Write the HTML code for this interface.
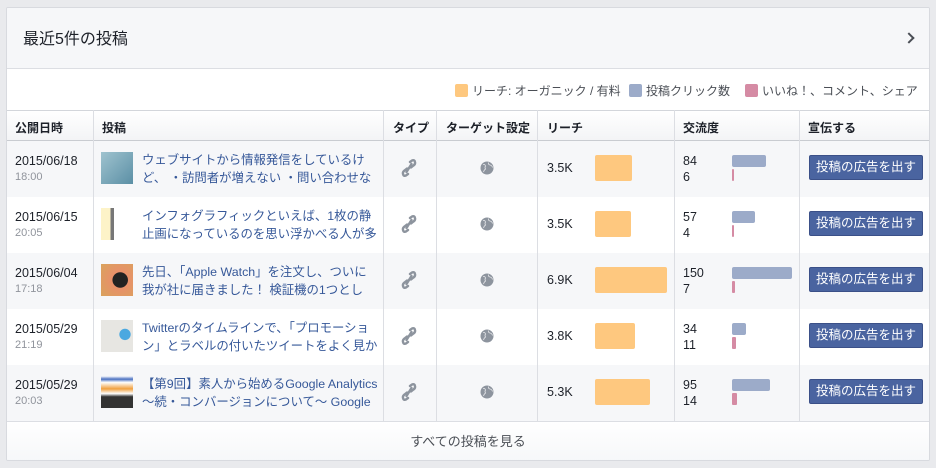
<!DOCTYPE html>
<html><head><meta charset="utf-8"><style>
*{margin:0;padding:0;box-sizing:border-box}
body{width:936px;height:468px;background:#e9eaed;font-family:"Liberation Sans","Noto Sans CJK JP",sans-serif;position:relative;overflow:hidden;color:#1d2129}
.panel{position:absolute;left:6px;top:7px;width:924px;height:454px;background:#fff;border:1px solid #d8dadf;border-radius:2px;overflow:hidden}
.hdr{position:absolute;left:0;top:0;width:100%;height:61px;background:#f6f7f9;border-bottom:1px solid #dcdee3}
.hdr .t{position:absolute;left:16px;top:17px;font-size:16px;color:#1d2129}
.hdr .ch{position:absolute;right:16px;top:26px;width:8px;height:8px;border-right:2px solid #4b4f56;border-top:2px solid #4b4f56;transform:rotate(45deg)}
.leg{position:absolute;top:74px;font-size:12px;color:#4b4f56;white-space:nowrap}
.sw{display:inline-block;width:13px;height:13px;border-radius:2px;vertical-align:-2px;margin-right:4px}
.th{position:absolute;left:0;top:102px;width:100%;height:31px;background:linear-gradient(#fff,#f3f4f6);border-top:1px solid #d3d6db;border-bottom:1px solid #c9ccd1;font-size:12px;font-weight:bold}
.th div{position:absolute;top:8px}
.vl{position:absolute;top:102px;width:1px;height:311px;background:#dcdee3}
.row{position:absolute;left:0;width:100%;height:56px;font-size:12px}
.row.g{background:#f6f7f9}
.d{position:absolute;left:8px;top:12px;font-size:12.5px;line-height:16px}
.d span{color:#90949c;font-size:11px;display:block}
.th2{position:absolute;left:94px;top:11px;width:32px;height:32px}
.p{position:absolute;left:135px;top:10px;width:236px;color:#365899;font-size:12.4px;line-height:18px}
.p div{white-space:nowrap;overflow:hidden}
.lk{position:absolute;left:394px;top:18px}
.gl{position:absolute;left:473px;top:20px}
.rn{position:absolute;left:540px;top:20px;font-size:12.5px}
.rb{position:absolute;left:588px;top:14px;height:26px;background:#fec87f;border-radius:2px}
.en{position:absolute;left:676px;top:12px;font-size:12.5px;line-height:16px}
.eb{position:absolute;left:725px;top:14px;height:12px;background:#9cabc9;border-radius:2px}
.ep{position:absolute;left:725px;top:28px;height:12px;background:#d58ba4;border-radius:1px}
.btn{position:absolute;left:802px;top:14px;width:114px;height:25px;background:#4a64a0;border:1px solid #3b5088;border-radius:2px;color:#fff;font-size:12.5px;text-align:center;line-height:23px}
.ft{position:absolute;left:0;top:413px;width:100%;height:41px;background:linear-gradient(#fff,#f6f7f9);border-top:1px solid #dcdee3;text-align:center;font-size:13px;line-height:40px;color:#4b4f56}
</style></head><body>
<svg width="0" height="0" style="position:absolute"><defs>
<symbol id="lk" viewBox="0 0 16 18"><g fill="none" stroke="#8d949e" stroke-width="2.4" stroke-linecap="round"><path d="M9 3 L11 1.5 Q13.5 0.5 14 3 Q14.5 5 12.5 6.5 L10 8.5"/><path d="M7 15 L5 16.5 Q2.5 17.5 2 15 Q1.5 13 3.5 11.5 L6 9.5"/><path d="M10.5 5 L5.5 13"/></g></symbol>
<symbol id="gl" viewBox="0 0 14 14"><circle cx="7" cy="7" r="6.5" fill="#8d949e"/><path d="M3 3.5 Q5 3 5.5 5 Q4.5 6.5 5.5 8 Q4 9 3.5 11 M8.5 1.5 Q8 3.5 10 4 Q12 4.5 12.5 6.5" fill="none" stroke="#e6e7ea" stroke-width="0.8"/></symbol>
</defs></svg>
<div class="panel">
<div class="hdr"><div class="t">最近5件の投稿</div><div class="ch"></div></div>
<div class="leg" style="left:448px"><span class="sw" style="background:#fec87f"></span>リーチ: オーガニック / 有料</div>
<div class="leg" style="left:622px"><span class="sw" style="background:#9cabc9"></span>投稿クリック数</div>
<div class="leg" style="left:738px"><span class="sw" style="background:#d58ba4"></span>いいね！、コメント、シェア</div>
<div class="th">
<div style="left:8px">公開日時</div><div style="left:95px">投稿</div><div style="left:386px">タイプ</div><div style="left:439px">ターゲット設定</div><div style="left:540px">リーチ</div><div style="left:676px">交流度</div><div style="left:801px">宣伝する</div>
</div>

<div class="row g" style="top:133px"><div class="d">2015/06/18<span>18:00</span></div><div class="th2" style="background:linear-gradient(135deg,#9fc3cf,#5b8fa5)"></div><div class="p"><div>ウェブサイトから情報発信をしているけ</div><div>ど、 ・訪問者が増えない ・問い合わせな</div></div><svg class="lk" width="16" height="18"><use href="#lk"/></svg><svg class="gl" width="14" height="14"><use href="#gl"/></svg><div class="rn">3.5K</div><div class="rb" style="width:37px"></div><div class="en">84<br>6</div><div class="eb" style="width:34px"></div><div class="ep" style="width:2px"></div><div class="btn">投稿の広告を出す</div></div>

<div class="row" style="top:189px"><div class="d">2015/06/15<span>20:05</span></div><div class="th2" style="background:linear-gradient(90deg,#fdf3c8 30%,#777 30%,#777 40%,#fff 40%)"></div><div class="p"><div>インフォグラフィックといえば、1枚の静</div><div>止画になっているのを思い浮かべる人が多</div></div><svg class="lk" width="16" height="18"><use href="#lk"/></svg><svg class="gl" width="14" height="14"><use href="#gl"/></svg><div class="rn">3.5K</div><div class="rb" style="width:36px"></div><div class="en">57<br>4</div><div class="eb" style="width:23px"></div><div class="ep" style="width:2px"></div><div class="btn">投稿の広告を出す</div></div>

<div class="row g" style="top:245px"><div class="d">2015/06/04<span>17:18</span></div><div class="th2" style="background:radial-gradient(circle at 60% 50%,#222 30%,#e8906a 32%,#d9a35c)"></div><div class="p"><div>先日、「Apple Watch」を注文し、ついに</div><div>我が社に届きました！ 検証機の1つとし</div></div><svg class="lk" width="16" height="18"><use href="#lk"/></svg><svg class="gl" width="14" height="14"><use href="#gl"/></svg><div class="rn">6.9K</div><div class="rb" style="width:72px"></div><div class="en">150<br>7</div><div class="eb" style="width:60px"></div><div class="ep" style="width:3px"></div><div class="btn">投稿の広告を出す</div></div>

<div class="row" style="top:301px"><div class="d">2015/05/29<span>21:19</span></div><div class="th2" style="background:radial-gradient(circle at 75% 45%,#4aa8e0 18%,#e7e6e2 20%)"></div><div class="p"><div>Twitterのタイムラインで、「プロモーショ</div><div>ン」とラベルの付いたツイートをよく見か</div></div><svg class="lk" width="16" height="18"><use href="#lk"/></svg><svg class="gl" width="14" height="14"><use href="#gl"/></svg><div class="rn">3.8K</div><div class="rb" style="width:40px"></div><div class="en">34<br>11</div><div class="eb" style="width:14px"></div><div class="ep" style="width:4px"></div><div class="btn">投稿の広告を出す</div></div>

<div class="row g" style="top:357px"><div class="d">2015/05/29<span>20:03</span></div><div class="th2" style="background:linear-gradient(#fff 0,#4a70c0 10%,#fff 20%,#f0a040 40%,#fff 55%,#333 65%)"></div><div class="p"><div>【第9回】素人から始めるGoogle Analytics</div><div>～続・コンバージョンについて～ Google</div></div><svg class="lk" width="16" height="18"><use href="#lk"/></svg><svg class="gl" width="14" height="14"><use href="#gl"/></svg><div class="rn">5.3K</div><div class="rb" style="width:55px"></div><div class="en">95<br>14</div><div class="eb" style="width:38px"></div><div class="ep" style="width:5px"></div><div class="btn">投稿の広告を出す</div></div>

<div class="vl" style="left:86px"></div><div class="vl" style="left:376px"></div><div class="vl" style="left:429px"></div><div class="vl" style="left:530px"></div><div class="vl" style="left:667px"></div><div class="vl" style="left:792px"></div>
<div class="ft">すべての投稿を見る</div>
</div>
</body></html>
